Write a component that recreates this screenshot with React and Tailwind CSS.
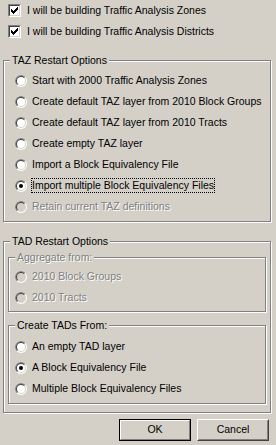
import React from "react";

const CHECK = [
  [6, 0, 1], [5, 1, 2], [0, 2, 1], [4, 2, 3], [0, 3, 2], [3, 3, 3], [0, 4, 5], [1, 5, 3], [2, 6, 1],
];

function Checkbox() {
  return (
    <div className="w-[13px] h-[13px] shrink-0 border border-t-[#808080] border-l-[#808080] border-r-white border-b-white">
      <div className="w-full h-full border border-t-[#404040] border-l-[#404040] border-r-[#d4d0c8] border-b-[#d4d0c8] bg-white">
        <svg width="9" height="9" viewBox="0 0 9 9" shapeRendering="crispEdges" className="block">
          {CHECK.map(([x, y, w], i) => (
            <rect key={i} x={x + 1} y={y + 1} width={w} height={1} fill="#000" />
          ))}
        </svg>
      </div>
    </div>
  );
}

function Radio({ checked, disabled }) {
  return (
    <svg width="12" height="12" viewBox="0 0 12 12" className="block shrink-0">
      <circle cx="6" cy="6" r="6" fill="#fff" />
      <path d="M1.757 10.243 A6 6 0 0 1 10.243 1.757 Z" fill="#808080" />
      <circle cx="6" cy="6" r="5" fill="#d4d0c8" />
      <path d="M2.464 9.536 A5 5 0 0 1 9.536 2.464 Z" fill="#404040" />
      <circle cx="6" cy="6" r="4" fill={disabled ? "#d4d0c8" : "#fff"} />
      {checked && <circle cx="6" cy="6" r="2" fill="#000" />}
    </svg>
  );
}

function RadioRow({ label, checked, disabled, focus }) {
  return (
    <div className="h-[21px] flex items-center">
      <Radio checked={checked} disabled={disabled} />
      {focus ? (
        <span className="ml-[4px] border border-dotted border-black leading-[13px] whitespace-nowrap">{label}</span>
      ) : (
        <span
          className={
            "ml-[5px] whitespace-nowrap " +
            (disabled ? "text-[#808080] [text-shadow:1px_1px_0_#fff]" : "")
          }
        >
          {label}
        </span>
      )}
    </div>
  );
}

function Legend({ children, disabled }) {
  return (
    <span
      className={
        "absolute left-[6px] top-[-7px] h-[13px] leading-[13px] px-[2px] bg-[#d4d0c8] whitespace-nowrap " +
        (disabled ? "text-[#808080] [text-shadow:1px_1px_0_#fff]" : "")
      }
    >
      {children}
    </span>
  );
}

export default function App() {
  return (
    <div className="w-[276px] h-[445px] overflow-hidden bg-[#d4d0c8] text-black font-['Liberation_Sans',Arial,sans-serif] text-[10.5px]">
      <div className="h-[21px] flex items-center pl-[8px]">
        <Checkbox />
        <span className="ml-[6px] whitespace-nowrap">I will be building Traffic Analysis Zones</span>
      </div>
      <div className="h-[21px] flex items-center pl-[8px]">
        <Checkbox />
        <span className="ml-[6px] whitespace-nowrap">I will be building Traffic Analysis Districts</span>
      </div>

      <div className="relative ml-[3px] mt-[18px] w-[268px] border border-[#808080] shadow-[1px_1px_0_#fff,inset_1px_1px_0_#fff] pt-[9px] pb-[4px] pl-[11px]">
        <Legend>TAZ Restart Options</Legend>
        <RadioRow label="Start with 2000 Traffic Analysis Zones" />
        <RadioRow label="Create default TAZ layer from 2010 Block Groups" />
        <RadioRow label="Create default TAZ layer from 2010 Tracts" />
        <RadioRow label="Create empty TAZ layer" />
        <RadioRow label="Import a Block Equivalency File" />
        <RadioRow label="Import multiple Block Equivalency Files" checked focus />
        <RadioRow label="Retain current TAZ definitions" disabled />
      </div>

      <div className="relative ml-[3px] mt-[19px] w-[268px] border border-[#808080] shadow-[1px_1px_0_#fff,inset_1px_1px_0_#fff] pt-[15px] pb-[8px] px-[4px]">
        <Legend>TAD Restart Options</Legend>
        <div className="relative border border-[#808080] shadow-[1px_1px_0_#fff,inset_1px_1px_0_#fff] pt-[8px] pb-[3px] pl-[6px]">
          <Legend disabled>Aggregate from:</Legend>
          <RadioRow label="2010 Block Groups" disabled />
          <RadioRow label="2010 Tracts" disabled />
        </div>
        <div className="relative mt-[13px] border border-[#808080] shadow-[1px_1px_0_#fff,inset_1px_1px_0_#fff] pt-[10px] pb-[4px] pl-[6px]">
          <Legend>Create TADs From:</Legend>
          <RadioRow label="An empty TAD layer" />
          <RadioRow label="A Block Equivalency File" checked />
          <RadioRow label="Multiple Block Equivalency Files" />
        </div>
      </div>

      <div className="mt-[6px] flex justify-end gap-[6px] pr-[7px]">
        <div className="w-[72px] h-[22px] border border-black">
          <div className="w-full h-full border border-t-white border-l-white border-r-[#808080] border-b-[#808080] flex items-center justify-center">
            OK
          </div>
        </div>
        <div className="w-[72px] h-[22px] border border-t-white border-l-white border-r-[#404040] border-b-[#404040]">
          <div className="w-full h-full border border-t-[#d4d0c8] border-l-[#d4d0c8] border-r-[#808080] border-b-[#808080] flex items-center justify-center">
            Cancel
          </div>
        </div>
      </div>
    </div>
  );
}
